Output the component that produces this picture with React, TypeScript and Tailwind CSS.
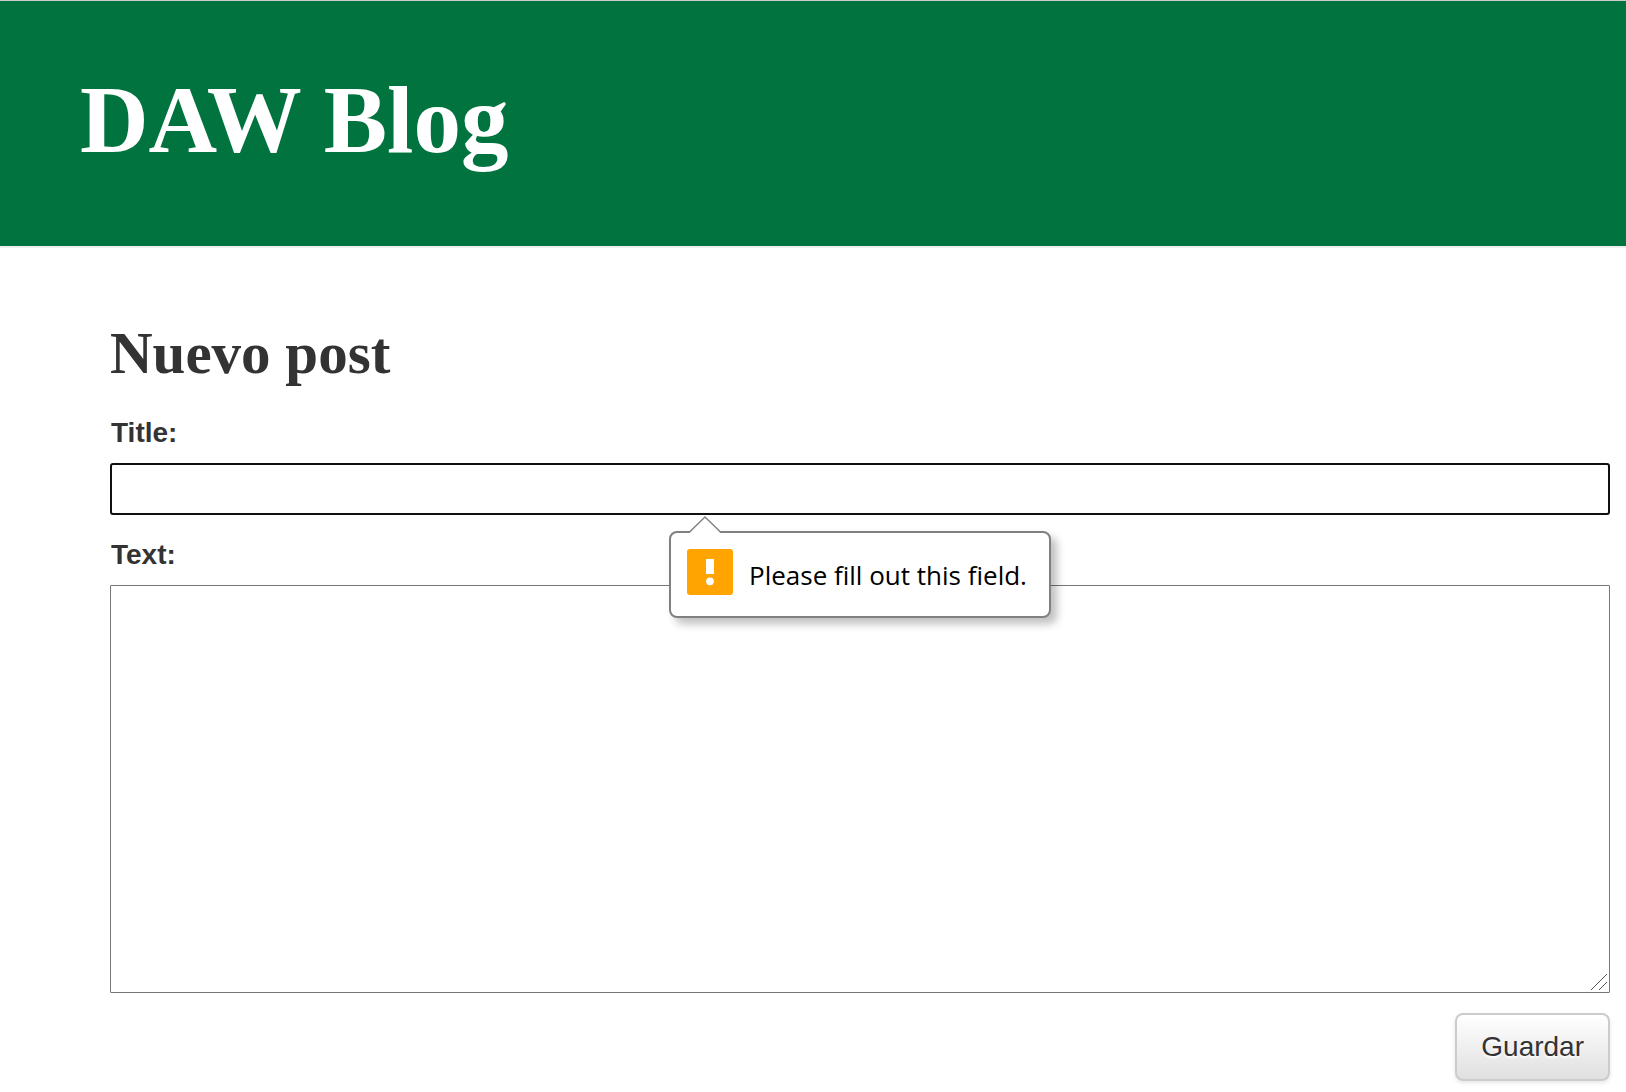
import React from "react";

function ValidationBubble() {
  return (
    <div
      role="alert"
      className="absolute left-[559px] top-full z-10 mt-4 flex h-[87px] items-center rounded-lg border-2 border-[#808080] bg-white pl-4 pr-[22px] shadow-[6px_6px_8px_rgba(0,0,0,0.25)]"
    >
      <svg
        className="absolute left-[17px] -top-[17px]"
        width="36"
        height="18"
        viewBox="0 0 36 18"
        aria-hidden="true"
      >
        <path d="M1 17.5L17 1L33 17.5V18H1Z" fill="#fff" />
        <path d="M1 16.5L17 1L33 16.5" fill="none" stroke="#808080" strokeWidth="1.4" />
      </svg>
      <svg className="mb-[5px] shrink-0" width="46" height="46" viewBox="0 0 46 46" aria-hidden="true">
        <rect width="46" height="46" rx="3" fill="#ffa400" />
        <rect x="19" y="10" width="8" height="15" fill="#fff" />
        <circle cx="23" cy="32.3" r="3.9" fill="#fff" />
      </svg>
      <span className="ml-4 whitespace-nowrap font-['Open_Sans',sans-serif] text-[26px] leading-9 text-black">
        Please fill out this field.
      </span>
    </div>
  );
}

export default function App() {
  return (
    <div className="min-h-screen bg-white font-['Liberation_Sans',Arial,sans-serif] text-[28px] leading-10 text-[#333]">
      <header className="border-b-2 border-t border-b-[#eee] border-t-[#ccc] bg-[#00733e] px-20 pb-[74px] pt-[67px]">
        <h1 className="font-['Liberation_Serif',serif] text-[95px] font-bold leading-[104px] text-white">
          DAW Blog
        </h1>
      </header>
      <main className="pl-[110px] pr-4 pt-[73px]">
        <h2 className="font-['Liberation_Serif',serif] text-[59px] font-bold leading-[64px]">
          Nuevo post
        </h2>
        <form className="mt-7 flex flex-col" onSubmit={(e) => e.preventDefault()} noValidate>
          <label htmlFor="title" className="self-start pl-px font-bold">
            Title:
          </label>
          <div className="relative mt-[10px]">
            <input
              id="title"
              type="text"
              required
              className="block h-[52px] w-full rounded-[3px] border-2 border-[#101010] bg-white px-2 outline-none"
            />
            <ValidationBubble />
          </div>
          <label htmlFor="text" className="mt-5 self-start pl-px font-bold">
            Text:
          </label>
          <div className="relative mt-[10px]">
            <textarea
              id="text"
              className="block h-[408px] w-full resize-none rounded-[1px] border border-[#767676] bg-white px-2 outline-none"
            />
            <svg
              className="pointer-events-none absolute bottom-[2px] right-[2px]"
              width="18"
              height="18"
              viewBox="0 0 18 18"
              fill="none"
              stroke="#555"
              aria-hidden="true"
            >
              <path d="M1 17L17 1M9 17L17 9" />
            </svg>
          </div>
          <button
            type="submit"
            className="mt-5 h-[68px] self-end rounded-lg border-2 border-[#ccc] bg-linear-to-b from-white to-[#e0e0e0] px-6 shadow-[0_2px_4px_rgba(0,0,0,0.1)] [text-shadow:0_2px_2px_#fff]"
          >
            Guardar
          </button>
        </form>
      </main>
    </div>
  );
}
